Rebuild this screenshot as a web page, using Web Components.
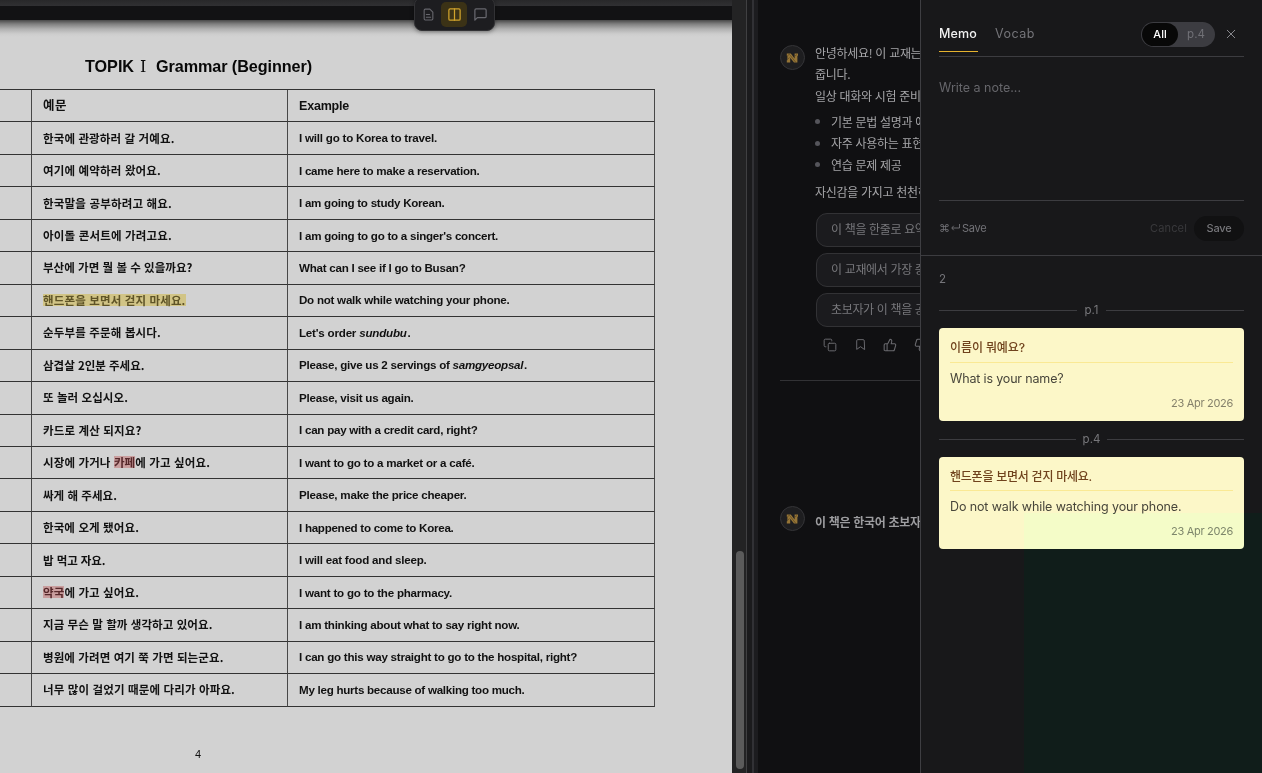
<!DOCTYPE html>
<html lang="ko">
<head>
<meta charset="utf-8">
<title>Reader</title>
<style>
html,body{margin:0;height:100%;background:#101012;overflow:hidden}
body{font-family:Inter,"Noto Sans CJK KR",sans-serif}
</style>
</head>
<body>
<reader-app></reader-app>
<script>
class Base extends HTMLElement{
  connectedCallback(){
    if(this.shadowRoot)return;
    const root=this.attachShadow({mode:'open'});
    const t=document.createElement('template');
    t.innerHTML=this.view();
    root.append(t.content.cloneNode(true));
    this.ready&&this.ready(root);
  }
}
const define=(name,view,ready)=>customElements.define(name,class extends Base{
  view(){return view(this)}
  ready(r){ready&&ready(this,r)}
});
const svg=(s,body,w=2)=>`<svg width="${s}" height="${s}" viewBox="0 0 24 24" fill="none" stroke="currentColor" stroke-width="${w}" stroke-linecap="round" stroke-linejoin="round" style="display:block">${body}</svg>`;
const icons={
  file:'<path d="M14.5 2H6a2 2 0 0 0-2 2v16a2 2 0 0 0 2 2h12a2 2 0 0 0 2-2V7.500z"/><path d="M8 12h6M8 17h8"/>',
  columns:'<rect x="3" y="3" width="18" height="18" rx="2"/><path d="M12 3v18"/>',
  chat:'<path d="M21 15a2 2 0 0 1-2 2H7l-4 4V5a2 2 0 0 1 2-2h14a2 2 0 0 1 2 2z"/>',
  copy:'<rect x="9" y="9" width="13" height="13" rx="2"/><path d="M5 15H4a2 2 0 0 1-2-2V4a2 2 0 0 1 2-2h9a2 2 0 0 1 2 2v1"/>',
  mark:'<path d="M19 21l-7-5-7 5V5a2 2 0 0 1 2-2h10a2 2 0 0 1 2 2z"/>',
  up:'<path d="M7 10v12M15 5.880 14 10h5.830a2 2 0 0 1 1.920 2.560l-2.330 8A2 2 0 0 1 17.500 22H4a2 2 0 0 1-2-2v-8a2 2 0 0 1 2-2h2.760a2 2 0 0 0 1.790-1.110L12 2a3.130 3.130 0 0 1 3 3.880Z"/>',
  down:'<path d="M17 14V2M9 18.120 10 14H4.170a2 2 0 0 1-1.920-2.560l2.330-8A2 2 0 0 1 6.500 2H20a2 2 0 0 1 2 2v8a2 2 0 0 1-2 2h-2.760a2 2 0 0 0-1.790 1.110L12 22a3.130 3.130 0 0 1-3-3.880Z"/>',
  x:'<path d="M3 3l18 18M21 3L3 21"/>'
};
define('ui-icon',e=>`<style>:host{display:block;flex:none}</style>${svg(e.getAttribute('size')||13,icons[e.getAttribute('name')],e.getAttribute('stroke')||2)}`);

define('doc-row',()=>`<style>
:host{display:grid;grid-template-columns:32px 256px 367px;height:32.46px;color:#111;box-sizing:border-box}
div{border-bottom:1px solid #333;border-right:1px solid #484848;box-sizing:border-box;display:flex;align-items:center;padding-left:11px;white-space:nowrap}
.e{font:bold 11.600px/16px "Liberation Sans",sans-serif}
.k{font:bold 11.500px/16px "Noto Sans CJK KR",sans-serif;padding-bottom:1px}
:host([head]) .e{font-size:12.500px}:host([head]) .k{font-size:12.500px}
</style><div></div><div class="k"><slot name="k"></slot></div><div class="e"><slot></slot></div>`);

const rows=[
['예문',24,'Example',50],
['한국에 관광하러 갈 거예요.',131.5,'I will go to Korea to travel.',138],
['여기에 예약하러 왔어요.',118,'I came here to make a reservation.',180.5],
['한국말을 공부하려고 해요.',129,'I am going to study Korean.',145.5],
['아이돌 콘서트에 가려고요.',129,"I am going to go to a singer's concert.",199],
['부산에 가면 뭘 볼 수 있을까요?',149.5,'What can I see if I go to Busan?',166.5],
['<mark class="y">핸드폰을 보면서 걷지 마세요.</mark>',142.5,'Do not walk while watching your phone.',210.5],
['순두부를 주문해 봅시다.',118,"Let's order <i>sundubu</i>&#8202;.",111.5],
['삼겹살 2인분 주세요.',101.5,'Please, give us 2 servings of <i>samgyeopsal</i>&#8202;.',228],
['또 놀러 오십시오.',85,'Please, visit us again.',114.5],
['카드로 계산 되지요?',98.5,'I can pay with a credit card, right?',178.5],
['시장에 가거나 <mark class="r">카페</mark>에 가고 싶어요.',167,'I want to go to a market or a café.',175.5],
['싸게 해 주세요.',74,'Please, make the price cheaper.',167.500],
['한국에 오게 됐어요.',96,'I happened to come to Korea.',154.5],
['밥 먹고 자요.',62.5,'I will eat food and sleep.',127.5],
['<mark class="r">약국</mark>에 가고 싶어요.',96,'I want to go to the pharmacy.',153],
['지금 무슨 말 할까 생각하고 있어요.',169.5,'I am thinking about what to say right now.',220.5],
['병원에 가려면 여기 쭉 가면 되는군요.',180.5,'I can go this way straight to go to the hospital, right?',278],
['너무 많이 걸었기 때문에 다리가 아파요.',192,'My leg hurts because of walking too much.',225.5]];

define('doc-page',()=>`<style>
:host{display:flex;flex-direction:column;width:732px;height:753px;background:linear-gradient(#484848 0,#808080 4px,#b0b0b0 9px,#cdcdcd 14px,#d2d2d2 17px);overflow:hidden;color:#111}
h1{margin:35px 0 0 85px;height:22px;line-height:22px;font:bold 16.200px/22px "Liberation Sans",sans-serif;display:flex;white-space:nowrap;color:#080808}
.n{width:22px;text-indent:6px;font:400 16px/23px "DejaVu Serif",serif}
.t{margin-top:12px;width:655px;border-top:1px solid #333;flex:none}
mark{color:inherit;display:inline-block;height:12px;line-height:12px}
mark.y{background:#d1c486;color:#5f5427}mark.r{background:#c99d9d;color:#56282a}
footer{margin:41px 0 0 188px;width:20px;text-align:center;font:11px/13px "Liberation Sans",sans-serif}
</style><h1><fit-text w="49">TOPIK</fit-text><span class="n">Ⅰ</span><fit-text w="156">Grammar (Beginner)</fit-text></h1>
<div class="t">${rows.map((r,i)=>`<doc-row ${i?'':'head'}><fit-text slot="k" w="${r[1]}">${r[0]}</fit-text><fit-text w="${r[3]}">${r[2]}</fit-text></doc-row>`).join('')}</div><footer>4</footer>`);

define('view-switch',()=>`<style>
:host{position:absolute;left:414px;top:-3px;width:79px;height:32px;border:1px solid #323235;border-radius:8px;background:#1d1d20;display:flex;align-items:center;justify-content:space-between;box-sizing:content-box;color:#67676d;z-index:2;box-shadow:0 1px 4px #0006}
div{width:26px;height:25px;display:flex;align-items:center;justify-content:center;border-radius:5px}
div:first-child{margin-left:1px}div:last-child{margin-right:1px}
.on{background:#3b3216;color:#d0a32d}
</style><div><ui-icon name="file"></ui-icon></div><div class="on"><ui-icon name="columns" size="15"></ui-icon></div><div><ui-icon name="chat" size="15"></ui-icon></div>`);

define('doc-pane',()=>`<style>
:host{display:flex;position:relative;width:746px;flex:none;background:#232324}
.l{width:732px;display:flex;flex-direction:column}
.a{height:6px;background:linear-gradient(#28282a,#303033)}.b{height:14px;background:#121214}
.s{width:14px;position:relative;display:flex;flex-direction:column;justify-content:flex-end;align-items:center;padding-bottom:4px;box-sizing:border-box;padding-left:2px}
.th{width:8px;height:218px;border-radius:4px;background:#5b5b5b}
</style><view-switch></view-switch><div class="l"><div class="a"></div><div class="b"></div><doc-page></doc-page></div><div class="s"><div class="th"></div></div>`);

define('pane-divider',()=>`<style>:host{display:block;width:12px;flex:none;background:linear-gradient(90deg,#404042 0 1px,#1b1b1d 1px 6px,#313135 6px 8px,#1c1c1f 8px)}</style>`);

define('bot-avatar',()=>`<style>:host{display:flex;box-sizing:border-box;width:25px;height:25px;border:1px solid #343437;border-radius:50%;background:#1e1e20;align-items:center;justify-content:center;flex:none}svg{display:block}</style>
<svg width="13" height="12" viewBox="0 0 13 12"><path d="M.8 1.500h4L8.600 6.500V1.500H12v2.300h-.6v6.700H8L4.200 5.800v4.700H.8V8.200h.6V3.800H.8z" fill="#967536"/><path d="M1.500 3.500 4 2M4.200 3.200 9.500 10M1.800 7l1.800-1.500M9 4l2-1.500" stroke="#4e3c1c" stroke-width=".6"/></svg>`);

define('prompt-chip',()=>`<style>:host{display:flex;align-items:center;height:34px;box-sizing:border-box;width:420px;border:1px solid #323235;border-radius:11px;background:#1b1b1e;color:#77777b;padding:0 0 1px 14px;margin-left:1px;font-size:12px;line-height:18px;letter-spacing:-.35px;white-space:nowrap}</style><span><slot></slot></span>`);

define('chat-pane',()=>`<style>
:host{display:flex;flex-direction:column;width:162px;flex:none;overflow:hidden;background:#101012;box-sizing:border-box;color:#a5a5a8;font:12px/18px "Noto Sans CJK KR",sans-serif;letter-spacing:-.3px;white-space:nowrap}
section{display:flex;gap:10px;margin-left:22px;flex:none}
.m1{margin-top:45px;height:335px}
.body{margin-top:-1px}
p{margin:0;height:21px;line-height:18px}
ul{margin:3px 0 0;padding:0;list-style:none}li{display:flex;align-items:center;height:21.500px;gap:11px}
li::before{content:"";width:5px;height:5px;border-radius:50%;background:#55555b}
.chips{display:flex;flex-direction:column;gap:6px;margin-top:12px}
.acts{display:flex;align-items:center;gap:16.500px;margin:11px 0 0 8px;color:#6a6a6f}
hr{border:0;height:1px;background:#323235;margin:0 0 0 22px;width:440px;flex:none}
.m2{margin-top:125px;font-weight:700;color:#9d9da0}.m2 p{margin-top:7px}
</style>
<section class="m1"><bot-avatar></bot-avatar><div class="body"><p>안녕하세요! 이 교재는</p><p>줍니다.</p><p style="margin-top:1px">일상 대화와 시험 준비</p>
<ul><li>기본 문법 설명과 예</li><li>자주 사용하는 표현</li><li>연습 문제 제공</li></ul><p style="margin-top:7px;height:18px">자신감을 가지고 천천히</p>
<div class="chips"><prompt-chip>이 책을 한줄로 요약</prompt-chip><prompt-chip>이 교재에서 가장 중</prompt-chip><prompt-chip>초보자가 이 책을 공</prompt-chip></div>
<div class="acts"><ui-icon name="copy" size="14" stroke="1.700"></ui-icon><ui-icon name="mark" stroke="1.800"></ui-icon><ui-icon name="up" size="14" stroke="1.800"></ui-icon><ui-icon name="down" size="14" stroke="1.800"></ui-icon></div></div></section>
<hr><section class="m2"><bot-avatar></bot-avatar><p>이 책은 한국어 초보자</p></section>`);

define('page-rule',()=>`<style>:host{display:flex;align-items:center;gap:7px;height:18px;color:#77777b;font-size:11.500px;line-height:18px}i{flex:1;height:1px;background:#3c3c40}</style><i></i><slot></slot><i></i>`);

define('memo-card',e=>`<style>
:host{display:flex;flex-direction:column;box-sizing:border-box;background:#fcf7c8;border-radius:4px;padding:10px 11px 0;color:#47453a;height:${e.getAttribute('h')}px}
.q{height:${e.getAttribute('h')-69}px;border-bottom:1px solid #fae994;font:500 12px/19px Inter,"Noto Sans CJK KR",sans-serif;color:#70431d;box-sizing:content-box}
.b{font-size:12.500px;line-height:18px;margin-top:7px}.d{display:flex;justify-content:flex-end;font-size:11px;line-height:16px;margin-top:7px;color:#85816b}
</style><div class="q"><slot name="q"></slot></div><div class="b"><slot></slot></div><div class="d"><fit-text w="62">23 Apr 2026</fit-text></div>`);

define('memo-drawer',()=>`<style>
:host{display:flex;flex-direction:column;position:relative;width:342px;box-sizing:border-box;border-left:1px solid #3e3e42;background:#18181a;color:#75757a;flex:none;font-size:12.500px;line-height:18px}
header{margin:0 18px;height:57px;border-bottom:1px solid #3c3c40;box-sizing:border-box;display:flex;align-items:flex-start}
.tab{margin-top:25px;height:27px;box-sizing:border-box}.on{color:#f1f1f1;width:39px;margin-right:17px;font-weight:500;background:linear-gradient(#e6b32e,#e6b32e) bottom/100% 1.400px no-repeat}
.seg{margin:22px 0 0 auto;width:74px;height:25px;border-radius:13px;background:#3c3c41;display:flex;box-sizing:border-box;padding:1px;color:#707076;line-height:23px;font-size:11.500px}
.seg b{width:36px;border-radius:12px;background:#080808;color:#fff;font-weight:500;text-align:center;line-height:23px;font-size:11px}.seg span{flex:1;text-align:center}
.cl{margin:29px 8px 0 11px;color:#88888d}
.ta{margin:0 18px;height:144px;box-sizing:border-box;border-bottom:1px solid #3c3c40;padding-top:22px;color:#66666b}
.row{height:54px;padding:0 18px;border-bottom:1px solid #3c3c40;display:flex;align-items:center;font-size:11px;color:#737378}
.keys{display:flex;align-items:center;gap:2px}
.cancel{margin-left:auto;margin-right:7px;color:#39393c}
.save{width:50px;height:25px;border-radius:13px;background:#111112;display:flex;align-items:center;justify-content:center;font-weight:500;color:#77777b}
.n{margin:14px 18px 0;font-size:11.500px}
.list{margin:18px 18px 0;display:flex;flex-direction:column;gap:9px}
.g,.h{position:absolute;left:103px;right:0;top:513px;bottom:0;pointer-events:none}
.g{background:#080000;mix-blend-mode:difference}.h{background:#000500;mix-blend-mode:plus-lighter}
</style>
<header><div class="tab on"><fit-text w="38">Memo</fit-text></div><div class="tab"><fit-text w="40">Vocab</fit-text></div><div class="seg"><b>All</b><span>p.4</span></div><ui-icon class="cl" name="x" size="10" stroke="2.400"></ui-icon></header>
<div class="ta"><fit-text w="82">Write a note...</fit-text></div>
<div class="row"><div class="keys"><fit-text w="10">⌘</fit-text><svg width="9" height="8" viewBox="0 0 10 9" fill="none" stroke="#737378"><path d="M9.500 0v4.500H1M3 2 .8 4.500 3 7"/></svg><fit-text w="24.500">Save</fit-text></div><fit-text class="cancel" w="37">Cancel</fit-text><div class="save"><fit-text w="25">Save</fit-text></div></div>
<div class="n">2</div>
<div class="list"><page-rule style="margin-top:-5px">p.1</page-rule><memo-card h="93"><fit-text slot="q" w="75">이름이 뭐예요?</fit-text><fit-text w="113.500">What is your name?</fit-text></memo-card>
<page-rule>p.4</page-rule><memo-card h="92"><fit-text slot="q" w="142">핸드폰을 보면서 걷지 마세요.</fit-text><fit-text w="231.500">Do not walk while watching your phone.</fit-text></memo-card></div>
<div class="g"></div><div class="h"></div>`);

define('reader-app',()=>`<style>:host{display:flex;width:1262px;height:773px;overflow:hidden}</style><doc-pane></doc-pane><pane-divider></pane-divider><chat-pane></chat-pane><memo-drawer></memo-drawer>`);

/* Text whose tracking is adjusted so that the run takes the width given in w. */
define('fit-text',()=>`<style>:host{display:inline-block;white-space:pre}</style><slot></slot>`,e=>{
  e.style.letterSpacing='0px';
  const w=e.getBoundingClientRect().width,n=e.textContent.length;
  if(w)e.style.letterSpacing=((+e.getAttribute('w')-w)/n).toFixed(3)+'px';
});
</script>
</body>
</html>
